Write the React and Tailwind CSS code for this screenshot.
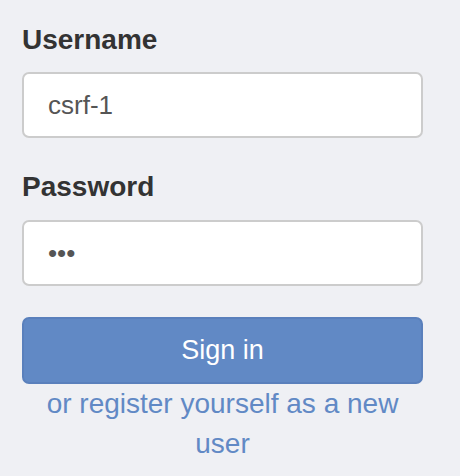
import React from 'react';

export default function App() {
  return (
    <div className="min-h-[476px] w-full bg-[#eff0f4] font-['Liberation_Sans',Arial,sans-serif]">
      <form className="w-[401px] ml-[22px] pt-[21px]" onSubmit={(e) => e.preventDefault()}>
        {/* Username */}
        <label className="block text-[28px] leading-[38px] font-bold text-[#333333] mb-[13px]">
          Username
        </label>
        <input
          type="text"
          defaultValue="csrf-1"
          className="block w-full h-[66px] px-[24px] bg-white border-2 border-[#cccccc] rounded-[7px] text-[26px] text-[#555555] outline-none"
        />

        {/* Password */}
        <label className="block mt-[30px] text-[28px] leading-[38px] font-bold text-[#333333] mb-[14px]">
          Password
        </label>
        <input
          type="password"
          defaultValue="abc"
          className="block w-full h-[66px] px-[24px] bg-white border-2 border-[#cccccc] rounded-[7px] text-[26px] text-[#555555] outline-none"
        />

        <button
          type="submit"
          className="block w-full mt-[31px] h-[67px] bg-[#6189c5] border-2 border-[#5a80bc] rounded-[7px] text-white text-[27px]"
        >
          Sign in
        </button>

        <div className="text-center text-[28px] leading-[40px] text-[#6189c5]">
          <a href="#">or register yourself as a new user</a>
        </div>
      </form>
    </div>
  );
}
